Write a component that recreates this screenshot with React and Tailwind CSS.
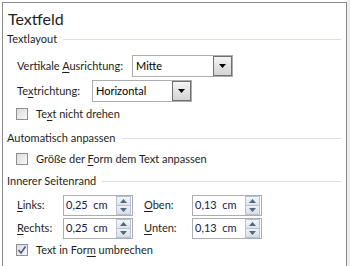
import React from 'react';

const font = { fontFamily: 'Lato, "Liberation Sans", sans-serif' };

const U = ({ children }) => <span className="underline underline-offset-2">{children}</span>;

const SectionHeader = ({ title }) => (
  <div className="flex items-center h-[20px] pr-[5px]">
    <span className="text-[11px] text-[#1e1e1e] whitespace-nowrap">{title}</span>
    <div className="flex-1 h-px bg-[#d9e1e7] ml-[6px]" />
  </div>
);

const Checkbox = ({ checked, children }) => (
  <div className="flex items-center h-[22px] pl-[9px]">
    <div className="w-[12px] h-[12px] shrink-0 border border-[#8f8f8f] bg-gradient-to-br from-[#dcdcdc] to-[#f7f7f7] flex items-center justify-center">
      {checked && (
        <svg width="10" height="10" viewBox="0 0 10 10">
          <path d="M1.5 5 L4 8 L8.5 1.5" fill="none" stroke="#4a5a8c" strokeWidth="1.6" />
        </svg>
      )}
    </div>
    <span className="ml-[8px] text-[11px] text-[#1e1e1e] whitespace-nowrap">{children}</span>
  </div>
);

const Select = ({ value, width }) => (
  <div className={`flex items-center shrink-0 h-[22px] border border-[#abadb3] bg-white ${width}`}>
    <span className="flex-1 pl-[3px] text-[11px] text-black">{value}</span>
    <div className="w-[19px] h-[20px] border border-[#707070] bg-gradient-to-b from-[#f4f4f4] to-[#d4d4d4] flex items-center justify-center">
      <svg width="7" height="4" viewBox="0 0 7 4">
        <path d="M0 0 H7 L3.5 4 Z" fill="#000" />
      </svg>
    </div>
  </div>
);

const Spinner = ({ value }) => (
  <div className="flex items-center shrink-0 h-[21px] w-[70px] border border-[#abadb3] bg-white">
    <span className="flex-1 pl-[2px] text-[11px] text-[#1a1a4a] whitespace-pre">{value}</span>
    <div className="flex flex-col w-[15px] h-[19px] mr-px">
      <div className="flex-1 border border-[#b8c3cf] bg-gradient-to-b from-[#f3f6f9] to-[#dde4eb] flex items-center justify-center">
        <svg width="7" height="4" viewBox="0 0 7 4"><path d="M0 4 H7 L3.5 0 Z" fill="#55677d" /></svg>
      </div>
      <div className="flex-1 border border-t-0 border-[#b8c3cf] bg-gradient-to-b from-[#eef2f6] to-[#d6dee6] flex items-center justify-center">
        <svg width="7" height="4" viewBox="0 0 7 4"><path d="M0 0 H7 L3.5 4 Z" fill="#55677d" /></svg>
      </div>
    </div>
  </div>
);

const Label = ({ width, className = '', children }) => (
  <span className={`shrink-0 whitespace-nowrap text-[11px] text-[#1e1e1e] ${width} ${className}`}>{children}</span>
);

export default function App() {
  return (
    <div className="w-[350px] h-[266px] bg-white overflow-hidden flex" style={font}>
      <div className="ml-[2px] mt-[2px] w-[345px] h-[280px] shrink-0 border-l border-t border-r border-[#8a8a8a] pl-[4px]">
        <div className="h-[26px] pt-[6px] pl-[1px] text-[16px] leading-[20px] text-[#1e1e1e]">Textfeld</div>
        <SectionHeader title="Textlayout" />

        <div className="flex items-center h-[22px] mt-[6px] pl-[10px]">
          <Label width="w-[115px]">Vertikale <U>A</U>usrichtung:</Label>
          <Select value="Mitte" width="w-[101px]" />
        </div>
        <div className="flex items-center h-[22px] mt-[3px] pl-[10px]">
          <Label width="w-[75px]">Te<U>x</U>trichtung:</Label>
          <Select value="Horizontal" width="w-[100px]" />
        </div>
        <div className="mt-px">
          <Checkbox>Te<U>x</U>t nicht drehen</Checkbox>
        </div>

        <div className="mt-[3px]"><SectionHeader title="Automatisch anpassen" /></div>
        <Checkbox>Größe der <U>F</U>orm dem Text anpassen</Checkbox>

        <div className="mt-px"><SectionHeader title="Innerer Seitenrand" /></div>
        <div className="flex items-center h-[22px] mt-[3px] pl-[10px]">
          <Label width="w-[46px]"><U>L</U>inks:</Label>
          <Spinner value="0,25  cm" />
          <Label width="w-[48px]" className="ml-[11px]"><U>O</U>ben:</Label>
          <Spinner value="0,13  cm" />
        </div>
        <div className="flex items-center h-[22px] mt-px pl-[10px]">
          <Label width="w-[46px]"><U>R</U>echts:</Label>
          <Spinner value="0,25  cm" />
          <Label width="w-[48px]" className="ml-[11px]"><U>U</U>nten:</Label>
          <Spinner value="0,13  cm" />
        </div>
        <Checkbox checked>Text in For<U>m</U> umbrechen</Checkbox>
      </div>
      <div className="flex-1 bg-[#eeeeee]" />
    </div>
  );
}
